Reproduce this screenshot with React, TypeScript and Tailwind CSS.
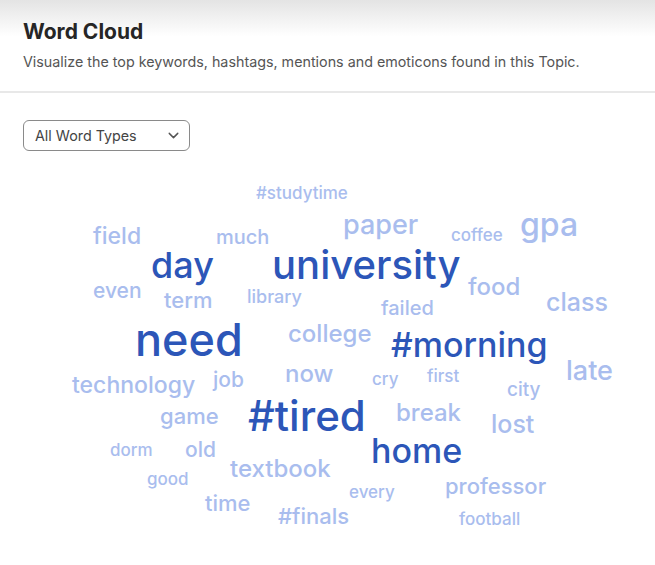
import { ChevronDown } from 'lucide-react'

type Word = { text: string; cls: string; dark?: boolean }

// Positions are the layout of the cloud itself, so words sit on a free canvas.
const words: Word[] = [
  { text: '#studytime', cls: 'left-[256px] top-[20px] text-[17px]' },
  { text: 'field', cls: 'left-[93px] top-[60px] text-[23px]' },
  { text: 'much', cls: 'left-[216px] top-[62px] text-[20px]' },
  { text: 'paper', cls: 'left-[343px] top-[46px] text-[27px]' },
  { text: 'coffee', cls: 'left-[451px] top-[62px] text-[17px]' },
  { text: 'gpa', cls: 'left-[520px] top-[44px] text-[32px]' },
  { text: 'day', cls: 'left-[151px] top-[82px] text-[36px]', dark: true },
  { text: 'university', cls: 'left-[272px] top-[80px] text-[40px]', dark: true },
  { text: 'even', cls: 'left-[93px] top-[115px] text-[21px]' },
  { text: 'term', cls: 'left-[164px] top-[124px] text-[22px]' },
  { text: 'library', cls: 'left-[247px] top-[123px] text-[18px]' },
  { text: 'food', cls: 'left-[468px] top-[110px] text-[24px]' },
  { text: 'class', cls: 'left-[546px] top-[125px] text-[25px]' },
  { text: 'failed', cls: 'left-[381px] top-[133px] text-[20px]' },
  { text: 'need', cls: 'left-[135px] top-[152px] text-[45px]', dark: true },
  { text: 'college', cls: 'left-[288px] top-[157px] text-[24px]' },
  { text: '#morning', cls: 'left-[391px] top-[163px] text-[34px]', dark: true },
  { text: 'late', cls: 'left-[566px] top-[192px] text-[27px]' },
  { text: 'technology', cls: 'left-[72px] top-[209px] text-[23px]' },
  { text: 'job', cls: 'left-[213px] top-[204px] text-[21px]' },
  { text: 'now', cls: 'left-[285px] top-[197px] text-[24px]' },
  { text: 'cry', cls: 'left-[372px] top-[206px] text-[17px]' },
  { text: 'first', cls: 'left-[427px] top-[203px] text-[17px]' },
  { text: 'city', cls: 'left-[507px] top-[215px] text-[19px]' },
  { text: 'game', cls: 'left-[160px] top-[240px] text-[22px]' },
  { text: '#tired', cls: 'left-[248px] top-[230px] text-[42px]', dark: true },
  { text: 'break', cls: 'left-[396px] top-[236px] text-[24px]' },
  { text: 'lost', cls: 'left-[491px] top-[247px] text-[25px]' },
  { text: 'dorm', cls: 'left-[110px] top-[277px] text-[17px]' },
  { text: 'old', cls: 'left-[185px] top-[274px] text-[21px]' },
  { text: 'home', cls: 'left-[371px] top-[269px] text-[34px]', dark: true },
  { text: 'textbook', cls: 'left-[230px] top-[292px] text-[24px]' },
  { text: 'good', cls: 'left-[147px] top-[306px] text-[17px]' },
  { text: 'every', cls: 'left-[349px] top-[319px] text-[17px]' },
  { text: 'professor', cls: 'left-[445px] top-[310px] text-[22px]' },
  { text: 'time', cls: 'left-[205px] top-[327px] text-[22px]' },
  { text: '#finals', cls: 'left-[278px] top-[340px] text-[22px]' },
  { text: 'football', cls: 'left-[459px] top-[346px] text-[17px]' },
]

export default function App() {
  return (
    <div className="w-[655px] h-[565px] bg-white overflow-hidden font-['Inter',sans-serif]">
      {/* Header */}
      <div className="h-[93px] bg-gradient-to-b from-[#e4e4e4] via-white via-40% to-white border-b-2 border-[#e8e8e8] px-[23px] pt-[18px]">
        <h1 className="text-[21px] leading-[28px] font-bold text-[#262626]">Word Cloud</h1>
        <p className="mt-[6px] text-[14.3px] leading-[20px] text-[#555]">
          Visualize the top keywords, hashtags, mentions and emoticons found in this Topic.
        </p>
      </div>

      {/* Filter */}
      <div className="px-[23px] pt-[27px]">
        <button className="w-[167px] h-[31px] flex items-center justify-between pl-[11px] pr-[7px] border border-[#8a8a8a] rounded-[6px] bg-white text-[14.3px] text-[#444]">
          <span>All Word Types</span>
          <ChevronDown size={17} strokeWidth={2} className="text-[#555]" />
        </button>
      </div>

      {/* Cloud */}
      <div className="relative h-[380px] mt-[14px]">
        {words.map((w) => (
          <span
            key={w.text}
            className={`absolute leading-none font-medium whitespace-nowrap ${w.cls} ${w.dark ? 'text-[#2c56b8]' : 'text-[#a9bdee]'}`}
          >
            {w.text}
          </span>
        ))}
      </div>
    </div>
  )
}
